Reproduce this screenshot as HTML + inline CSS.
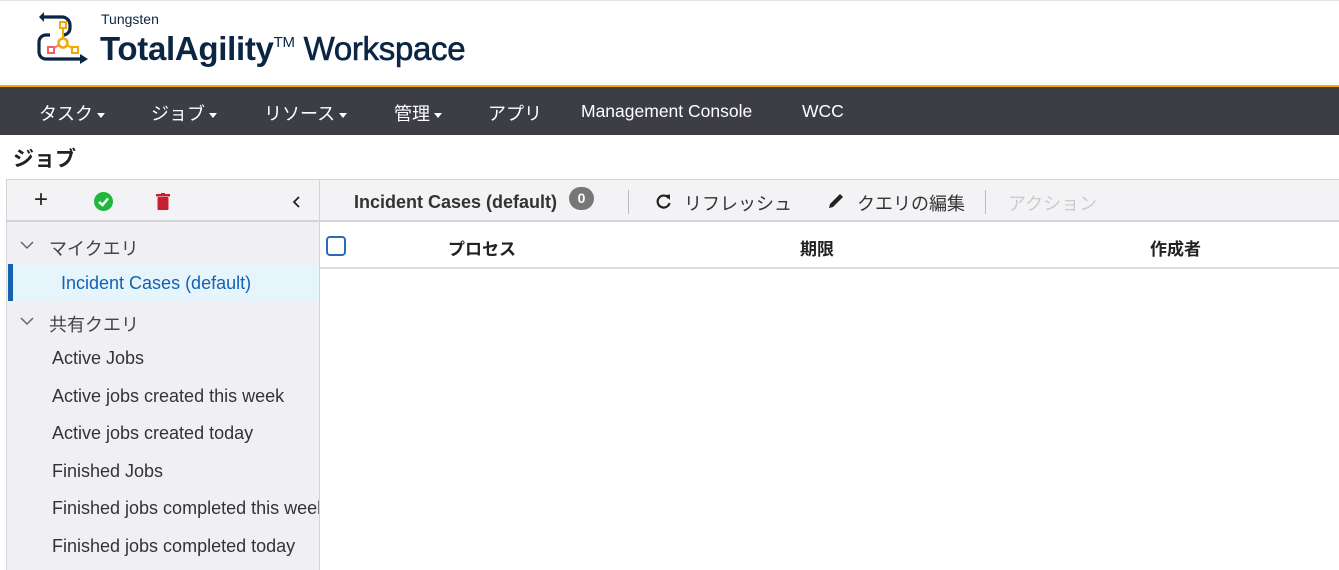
<!DOCTYPE html>
<html><head><meta charset="utf-8"><style>
*{box-sizing:border-box;margin:0;padding:0}
body{width:1339px;height:570px;overflow:hidden;background:#fff;font-family:"Liberation Sans","Noto Sans CJK JP",sans-serif;color:#222;position:relative}
.abs{position:absolute}
.nav{top:85px;left:0;width:1339px;height:50px;background:#3c3d45;border-top:2px solid #f5a800}
.nav span{position:absolute;top:13px;color:#fff;font-size:18px;white-space:nowrap}
.car{display:inline-block;border-left:4px solid transparent;border-right:4px solid transparent;border-top:5px solid #fff;vertical-align:middle;margin-left:4px}
.list div{position:absolute;left:0;width:312px;font-size:18px;color:#333;white-space:nowrap;overflow:hidden}
</style></head><body>
<div class="abs" style="left:0;top:0;width:1339px;height:84px;border-top:1px solid #e5e5e5"></div>
<svg class="abs" style="left:36px;top:10px" width="58" height="58" viewBox="0 0 58 58">
<path d="M3 7 L8 2 L8 12Z" fill="#0b2545"/>
<path d="M8 7 H26 a8 8 0 0 1 8 8 v3 a7 7 0 0 1 -7 7 M14 25 H10 a7 7 0 0 0 -7 7 v10 a7 7 0 0 0 7 7 H44" fill="none" stroke="#0b2545" stroke-width="3.2"/>
<path d="M44 44 L52 49 L44 54Z" fill="#0b2545"/>
<line x1="27" y1="18" x2="27" y2="29" stroke="#f5a800" stroke-width="2"/>
<rect x="24" y="12" width="6" height="6" fill="none" stroke="#f5a800" stroke-width="2"/>
<circle cx="27" cy="33" r="4.5" fill="none" stroke="#f5a800" stroke-width="2.5"/>
<line x1="23" y1="35" x2="18" y2="38" stroke="#f08060" stroke-width="2"/>
<rect x="12" y="37" width="6" height="6" fill="none" stroke="#f06060" stroke-width="2"/>
<line x1="31" y1="35" x2="36" y2="38" stroke="#f5a800" stroke-width="2"/>
<rect x="36" y="37" width="6" height="6" fill="none" stroke="#f5a800" stroke-width="2"/>
</svg>
<div class="abs" style="left:101px;top:11px;font-size:14px;color:#0b2545">Tungsten</div>
<div class="abs" style="left:100px;top:30px;font-size:33px;font-weight:bold;color:#0b2545;letter-spacing:-0.3px;white-space:nowrap">TotalAgility<span style="font-size:15px;font-weight:normal;vertical-align:top;position:relative;top:4px">TM</span> <span style="font-weight:normal;-webkit-text-stroke:0.6px #0b2545">Workspace</span></div>
<div class="abs nav">
<span style="left:39px">タスク<i class="car"></i></span>
<span style="left:151px">ジョブ<i class="car"></i></span>
<span style="left:264px">リソース<i class="car"></i></span>
<span style="left:394px">管理<i class="car"></i></span>
<span style="left:488px">アプリ</span>
<span style="left:581px;font-size:17.5px;top:14px">Management Console</span>
<span style="left:802px;font-size:17.5px;top:14px">WCC</span>
</div>
<div class="abs" style="left:13px;top:143px;font-size:21px;font-weight:bold;color:#222">ジョブ</div>
<div class="abs" style="left:6px;top:179px;width:1333px;height:391px;border:1px solid #d4d4d8;border-right:none;border-bottom:none"></div>
<div class="abs" style="left:7px;top:180px;width:1332px;height:42px;background:#f3f3f6;border-bottom:2px solid #d4d4d8"></div>
<div class="abs" style="left:7px;top:222px;width:312px;height:348px;background:#f0f0f4"></div>
<div class="abs" style="left:319px;top:180px;width:1px;height:390px;background:#d4d4d8"></div>
<div class="abs" style="left:34px;top:186px;font-size:24px;color:#222">+</div>
<svg class="abs" style="left:94px;top:192px" width="19" height="19"><circle cx="9.5" cy="9.5" r="9.5" fill="#1eb83a"/><path d="M5 10 L8.5 13 L14 6.5" fill="none" stroke="#fff" stroke-width="2.5"/></svg>
<svg class="abs" style="left:156px;top:193px" width="14" height="17"><rect x="0" y="1" width="14" height="2.5" fill="#c8202e"/><rect x="5" y="0" width="4" height="2" fill="#c8202e"/><rect x="1.5" y="4" width="11" height="13" rx="1" fill="#c8202e"/></svg>
<svg class="abs" style="left:292px;top:196px" width="10" height="12"><path d="M7 1 L2 6 L7 11" fill="none" stroke="#222" stroke-width="1.8"/></svg>
<div class="abs" style="left:354px;top:192px;font-size:18px;font-weight:bold;color:#333">Incident Cases (default)</div>
<div class="abs" style="left:569px;top:187px;width:25px;height:23px;border-radius:12px;background:#777;color:#fff;font-size:14px;font-weight:bold;text-align:center;line-height:22px">0</div>
<div class="abs" style="left:628px;top:190px;width:1px;height:24px;background:#bbb"></div>
<svg class="abs" style="left:655px;top:193px" width="17" height="17"><path d="M13.5 5 A6 6 0 1 0 14.5 10" fill="none" stroke="#222" stroke-width="2.2"/><path d="M10 2 L15 1.5 L15 7Z" fill="#222"/></svg>
<div class="abs" style="left:684px;top:190px;font-size:18px;color:#333">リフレッシュ</div>
<svg class="abs" style="left:827px;top:192px" width="18" height="18"><path d="M2 16 L3 12 L13 2 L16 5 L6 15Z" fill="#222"/></svg>
<div class="abs" style="left:857px;top:190px;font-size:18px;color:#333">クエリの編集</div>
<div class="abs" style="left:985px;top:190px;width:1px;height:24px;background:#bbb"></div>
<div class="abs" style="left:1008px;top:190px;font-size:18px;color:#ccc">アクション</div>
<div class="abs" style="left:320px;top:267px;width:1019px;height:2px;background:#dcdcdc"></div>
<div class="abs" style="left:326px;top:236px;width:20px;height:20px;border:2px solid #2a6ab8;border-radius:4px"></div>
<div class="abs" style="left:448px;top:235px;font-size:17px;font-weight:bold">プロセス</div>
<div class="abs" style="left:800px;top:235px;font-size:17px;font-weight:bold">期限</div>
<div class="abs" style="left:1150px;top:235px;font-size:17px;font-weight:bold">作成者</div>
<div class="abs" style="left:8px;top:264px;width:311px;height:37px;background:#e6f5fc"></div>
<div class="abs" style="left:8px;top:264px;width:5px;height:37px;background:#1462b0"></div>
<svg class="abs" style="left:20px;top:240px" width="14" height="10"><path d="M1 2 L7 8 L13 2" fill="none" stroke="#666" stroke-width="1.5"/></svg>
<svg class="abs" style="left:20px;top:316px" width="14" height="10"><path d="M1 2 L7 8 L13 2" fill="none" stroke="#666" stroke-width="1.5"/></svg>
<div class="abs list" style="left:7px;top:222px">
<div style="top:13px;left:42px;color:#444">マイクエリ</div>
<div style="top:51px;left:54px;color:#1462b0">Incident Cases (default)</div>
<div style="top:89px;left:42px;color:#444">共有クエリ</div>
<div style="top:126px;left:45px">Active Jobs</div>
<div style="top:164px;left:45px">Active jobs created this week</div>
<div style="top:201px;left:45px">Active jobs created today</div>
<div style="top:239px;left:45px">Finished Jobs</div>
<div style="top:276px;left:45px;width:267px">Finished jobs completed this week</div>
<div style="top:314px;left:45px">Finished jobs completed today</div>
</div>
</body></html>
